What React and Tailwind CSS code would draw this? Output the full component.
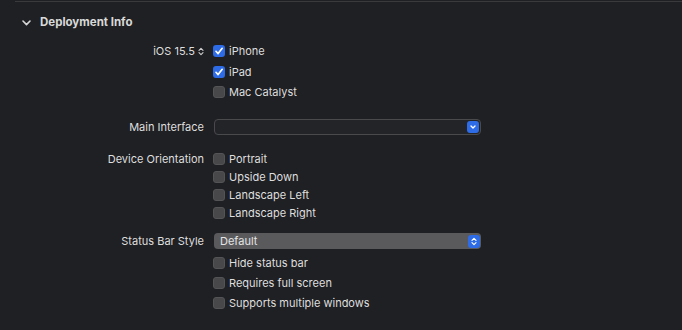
import React from "react";

const Check = ({ checked }) => (
  <div
    className={
      "w-[12px] h-[12px] rounded-[3px] flex items-center justify-center shrink-0 " +
      (checked ? "bg-[#2e6be6]" : "bg-[#48484b] border border-[#545457]")
    }
  >
    {checked && (
      <svg width="10" height="10" viewBox="0 0 10 10">
        <path d="M2 5.3 L4.1 7.6 L8.2 2.3" fill="none" stroke="white" strokeWidth="1.7" strokeLinecap="round" strokeLinejoin="round" />
      </svg>
    )}
  </div>
);

const Row = ({ label, checked, text, h = "h-5", extra = "" }) => (
  <div className={"flex items-center " + h + " " + extra}>
    <div className="w-[204px] text-right shrink-0">{label}</div>
    <div className="ml-[9px] flex items-center">
      <Check checked={checked} />
      <span className="ml-[4px]">{text}</span>
    </div>
  </div>
);

export default function App() {
  return (
    <div className="w-[682px] h-[330px] bg-[#1f2023] overflow-hidden text-[11px] text-[#dedede] font-['Inter','Liberation_Sans',sans-serif] leading-none">
      <div className="ml-[15px] mt-px h-px bg-[#3a3a3d]" />
      <div className="mt-[12px] h-[18px] flex items-center">
        <svg className="ml-[22px]" width="9" height="6" viewBox="0 0 9 6">
          <path d="M1 1 L4.5 4.6 L8 1" fill="none" stroke="#d6d6d6" strokeWidth="1.6" strokeLinecap="round" strokeLinejoin="round" />
        </svg>
        <span className="ml-[9px] font-bold text-[11.5px] text-[#d9d9d9]">Deployment Info</span>
      </div>

      <div className="mt-[9px]">
        <Row
          label={
            <span className="inline-flex items-center">
              iOS 15.5
              <svg className="ml-[3px]" width="6" height="9" viewBox="0 0 6 9">
                <path d="M1 3.3 L3 1.3 L5 3.3 M1 5.7 L3 7.7 L5 5.7" fill="none" stroke="#cfcfcf" strokeWidth="1.1" strokeLinecap="round" strokeLinejoin="round" />
              </svg>
            </span>
          }
          checked
          text="iPhone"
        />
        <Row label="" checked text="iPad" extra="mt-px" />
        <Row label="" text="Mac Catalyst" />

        <div className="mt-[17px] h-4 flex items-center">
          <div className="w-[204px] text-right shrink-0">Main Interface</div>
          <div className="ml-[10px] w-[267px] h-4 rounded-[4px] border border-[#4a4a4d] bg-[#232427] flex items-center justify-end pr-px">
            <div className="w-[12px] h-[12px] rounded-[3px] bg-[#2e6be6] flex items-center justify-center">
              <svg width="8" height="6" viewBox="0 0 8 6">
                <path d="M2 2 L4 4 L6 2" fill="none" stroke="white" strokeWidth="1.3" strokeLinecap="round" strokeLinejoin="round" />
              </svg>
            </div>
          </div>
        </div>

        <div className="mt-[15px]">
          <Row label="Device Orientation" text="Portrait" h="h-[18px]" />
          <Row label="" text="Upside Down" h="h-[18px]" />
          <Row label="" text="Landscape Left" h="h-[18px]" />
          <Row label="" text="Landscape Right" h="h-[18px]" />
        </div>

        <div className="mt-[11px] h-4 flex items-center">
          <div className="w-[204px] text-right shrink-0">Status Bar Style</div>
          <div className="ml-[10px] w-[267px] h-4 rounded-[4px] bg-[#5a5a5d] flex items-center justify-between pl-[6px] pr-px">
            <span className="text-[#e4e4e4]">Default</span>
            <div className="w-[12px] h-[13px] rounded-[3px] bg-[#2e6be6] flex items-center justify-center">
              <svg width="6" height="9" viewBox="0 0 6 9">
                <path d="M1 3.3 L3 1.3 L5 3.3 M1 5.7 L3 7.7 L5 5.7" fill="none" stroke="white" strokeWidth="1.2" strokeLinecap="round" strokeLinejoin="round" />
              </svg>
            </div>
          </div>
        </div>

        <div className="mt-[4px]">
          <Row label="" text="Hide status bar" />
          <Row label="" text="Requires full screen" />
          <Row label="" text="Supports multiple windows" />
        </div>
      </div>
    </div>
  );
}
